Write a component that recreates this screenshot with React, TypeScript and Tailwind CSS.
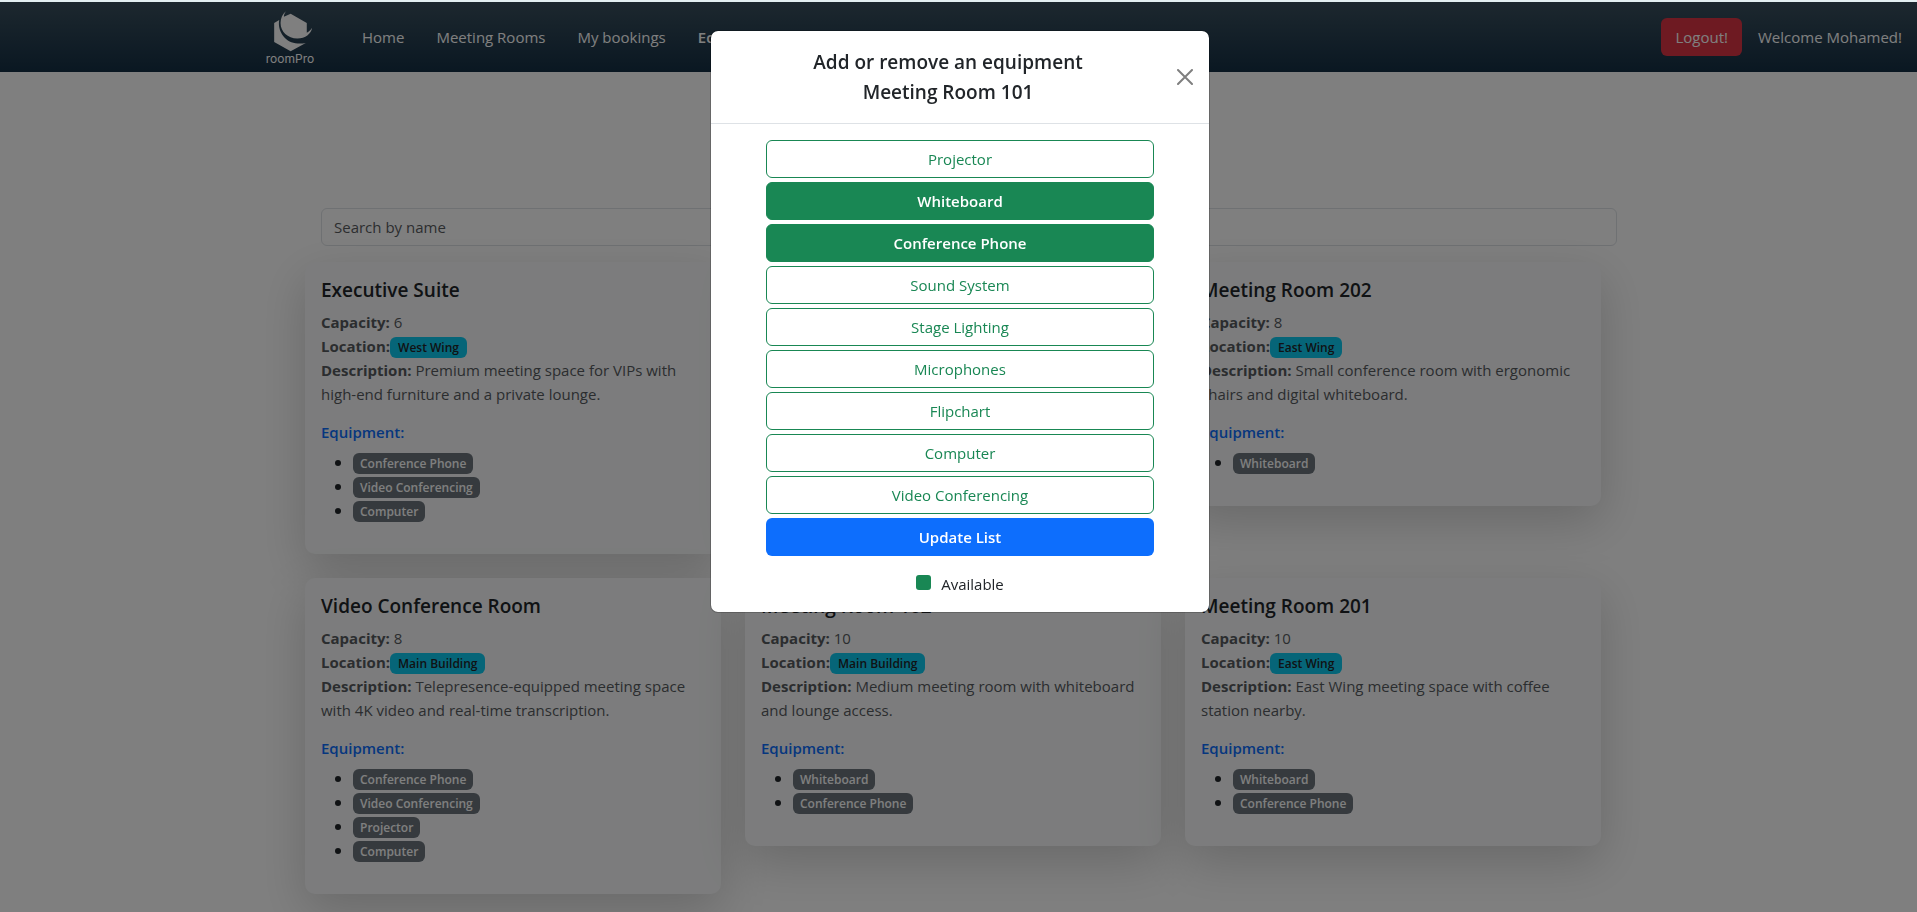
import { useState } from "react";

type Room = {
  name: string;
  capacity: number;
  location: string;
  description: string;
  equipment: string[];
};

const rooms: Room[] = [
  {
    name: "Executive Suite",
    capacity: 6,
    location: "West Wing",
    description: "Premium meeting space for VIPs with high-end furniture and a private lounge.",
    equipment: ["Conference Phone", "Video Conferencing", "Computer"],
  },
  {
    name: "Meeting Room 101",
    capacity: 8,
    location: "Main Building",
    description: "Standard meeting room with whiteboard and phone.",
    equipment: ["Whiteboard", "Conference Phone"],
  },
  {
    name: "Meeting Room 202",
    capacity: 8,
    location: "East Wing",
    description: "Small conference room with ergonomic chairs and digital whiteboard.",
    equipment: ["Whiteboard"],
  },
  {
    name: "Video Conference Room",
    capacity: 8,
    location: "Main Building",
    description: "Telepresence-equipped meeting space with 4K video and real-time transcription.",
    equipment: ["Conference Phone", "Video Conferencing", "Projector", "Computer"],
  },
  {
    name: "Meeting Room 102",
    capacity: 10,
    location: "Main Building",
    description: "Medium meeting room with whiteboard and lounge access.",
    equipment: ["Whiteboard", "Conference Phone"],
  },
  {
    name: "Meeting Room 201",
    capacity: 10,
    location: "East Wing",
    description: "East Wing meeting space with coffee station nearby.",
    equipment: ["Whiteboard", "Conference Phone"],
  },
];

const allEquipment = [
  "Projector",
  "Whiteboard",
  "Conference Phone",
  "Sound System",
  "Stage Lighting",
  "Microphones",
  "Flipchart",
  "Computer",
  "Video Conferencing",
];

function Logo() {
  return (
    <a href="#" className="flex w-12 flex-col items-center pt-0.5 text-white">
      <svg viewBox="100 30 118 122" className="ml-1.5 h-[41px] w-10" fill="currentColor" aria-hidden="true">
        <path d="M138 31 C134 37 132 42 132 47 L152 38 L200 66 L200 95 C207 91 212 86 216 80 C213 98 196 112 172 112 C143 112 122 92 122 66 C122 51 128 39 138 31 Z" />
        <path d="M103 66 L118 57 C112 88 134 122 166 126 C177 127 187 127 197 125 L152 150 L103 122 Z" />
      </svg>
      <span className="font-['Inter',sans-serif] text-[12px] leading-[14px]">roomPro</span>
    </a>
  );
}

function NavBar() {
  return (
    <nav className="flex h-[70px] items-center bg-linear-to-b from-[#3a505e] to-[#142f44] pr-[15px] pl-[266px] text-[15px] text-white">
      <Logo />
      <div className="ml-12 flex flex-1 items-center gap-8">
        <a href="#">Home</a>
        <a href="#">Meeting Rooms</a>
        <a href="#">My bookings</a>
        <a href="#" className="font-semibold">Equipments</a>
      </div>
      <button type="button" className="h-[38px] rounded-md bg-[#dc3545] px-3.5">
        Logout!
      </button>
      <span className="ml-4">Welcome Mohamed!</span>
    </nav>
  );
}

function RoomCard({ room }: { room: Room }) {
  return (
    <article className="rounded-[10px] bg-[#f8f9fa] p-4 pb-8 shadow-[0_16px_48px_rgba(0,0,0,0.175)]">
      <h2 className="mb-2 text-[19px] leading-6 font-semibold text-[#212529]">{room.name}</h2>
      <div className="mb-4 text-[15px] leading-6 text-[#575b5f]">
        <div>
          <strong>Capacity:</strong> {room.capacity}
        </div>
        <div className="flex items-center">
          <strong>Location:</strong>
          <span className="mt-0.5 rounded-md bg-[#0dcaf0] px-2 text-[12px] leading-[21px] font-semibold text-[#212529]">
            {room.location}
          </span>
        </div>
        <p>
          <strong>Description:</strong> {room.description}
        </p>
      </div>
      <h3 className="mb-2 text-[15px] leading-5 font-semibold text-[#0d6efd]">Equipment:</h3>
      <ul className="list-disc pl-8 text-[#212529]">
        {room.equipment.map((item) => (
          <li key={item} className="h-6 text-[16px] leading-6">
            <span className="inline-block rounded-md bg-[#6c757d] px-[7px] align-middle text-[12px] leading-[21px] font-semibold text-white">
              {item}
            </span>
          </li>
        ))}
      </ul>
    </article>
  );
}

function EquipmentDialog({ onClose }: { onClose: () => void }) {
  const [available, setAvailable] = useState(["Whiteboard", "Conference Phone"]);
  const toggle = (item: string) =>
    setAvailable((list) => (list.includes(item) ? list.filter((x) => x !== item) : [...list, item]));

  return (
    <div className="fixed inset-x-0 top-0.5 bottom-0 bg-black/50 pt-7 pr-4 pl-[19px]">
      <div
        role="dialog"
        aria-modal="true"
        aria-labelledby="dialog-title"
        className="mx-auto max-w-[500px] rounded-lg border border-black/20 bg-white bg-clip-padding text-[#212529]"
      >
        <header className="flex items-center border-b border-[#dee2e6] p-4 pr-2">
          <h1 id="dialog-title" className="flex-1 text-center text-[19px] leading-[30px] font-semibold">
            Add or remove an equipment
            <br />
            Meeting Room 101
          </h1>
          <button type="button" aria-label="Close" onClick={onClose} className="p-2 text-black/50">
            <svg viewBox="0 0 16 16" className="size-4" fill="none" stroke="currentColor" strokeWidth="2" strokeLinecap="round">
              <path d="M1 1 L15 15 M15 1 L1 15" />
            </svg>
          </button>
        </header>
        <div className="p-4">
          <div className="mx-auto flex w-5/6 flex-col gap-1 text-[15px]">
            {allEquipment.map((item) => (
              <button
                key={item}
                type="button"
                aria-pressed={available.includes(item)}
                onClick={() => toggle(item)}
                className={
                  available.includes(item)
                    ? "h-[38px] rounded-md border border-[#198754] bg-[#198754] font-semibold text-white"
                    : "h-[38px] rounded-md border border-[#198754] text-[#198754]"
                }
              >
                {item}
              </button>
            ))}
            <button type="button" className="h-[38px] rounded-md bg-[#0d6efd] font-semibold text-white">
              Update List
            </button>
          </div>
          <div className="mt-4 flex justify-center gap-2.5 text-[15px] leading-6">
            <span className="mt-[3px] size-[15px] rounded-[3px] bg-[#198754]" />
            Available
          </div>
        </div>
      </div>
    </div>
  );
}

export default function App() {
  const [open, setOpen] = useState(true);
  return (
    <div className="min-h-screen bg-white font-['Open_Sans','Noto_Sans',sans-serif]">
      <div className="h-0.5 bg-[#e3eff1]" />
      <NavBar />
      <main className="pt-[136px] pl-[5px]">
        <div className="mx-auto max-w-[1312px]">
          <div className="pl-4">
            <input
              type="text"
              aria-label="Search by name"
              placeholder="Search by name"
              className="block h-[38px] w-full rounded-md border border-[#dee2e6] bg-white px-3 text-[15px] placeholder:text-[#595c5f]"
            />
          </div>
          <div className="mt-4 grid grid-cols-3 items-start gap-6 pr-4">
            {rooms.map((room) => (
              <RoomCard key={room.name} room={room} />
            ))}
          </div>
        </div>
      </main>
      {open && <EquipmentDialog onClose={() => setOpen(false)} />}
    </div>
  );
}
